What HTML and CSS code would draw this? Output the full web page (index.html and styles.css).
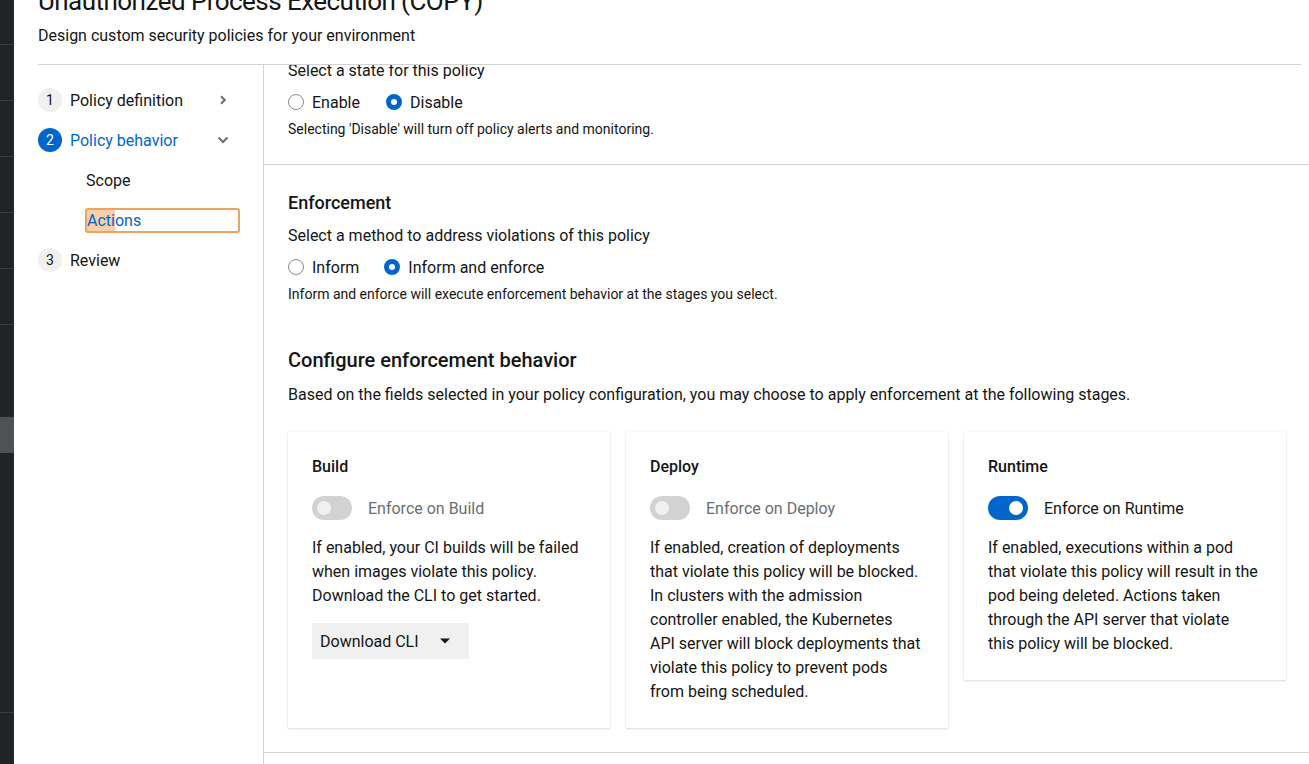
FILE: index.html
```html
<!DOCTYPE html>
<html lang="en">
<head>
<meta charset="utf-8">
<title>Unauthorized Process Execution (COPY)</title>
<link rel="stylesheet" href="styles.css">
</head>
<body>
<div class="app">
  <aside class="rail">
    <div class="rail-item first"></div>
    <div class="rail-item"></div>
    <div class="rail-item"></div>
    <div class="rail-item"></div>
    <div class="rail-item"></div>
    <div class="rail-item"></div>
    <div class="rail-active"></div>
    <div class="rail-rule"></div>
  </aside>
  <main class="page">
    <header class="page-head">
      <h1 class="title">Unauthorized Process Execution (COPY)</h1>
      <p class="subtitle">Design custom security policies for your environment</p>
    </header>
    <div class="wizard">
      <nav class="nav">
        <div class="nav-item">
          <span class="step-num">1</span>
          <span class="nav-label">Policy definition</span>
          <span class="chev"><svg width="10" height="10" viewBox="0 0 10 10"><polyline points="3,1.2 6.8,5 3,8.8" fill="none" stroke="#6a6e73" stroke-width="2"/></svg></span>
        </div>
        <div class="nav-item current">
          <span class="step-num">2</span>
          <span class="nav-label">Policy behavior</span>
          <span class="chev"><svg width="12" height="10" viewBox="0 0 12 10"><polyline points="1.5,2.5 6,7 10.5,2.5" fill="none" stroke="#6a6e73" stroke-width="2"/></svg></span>
        </div>
        <div class="sub-item"><span class="sub-link">Scope</span></div>
        <div class="sub-item"><span class="sub-link focused"><span class="find-hit">Acti</span>ons</span></div>
        <div class="nav-item">
          <span class="step-num">3</span>
          <span class="nav-label">Review</span>
        </div>
      </nav>
      <div class="wizard-body">
        <section class="section section-state">
          <p class="label">Select a state for this policy</p>
          <div class="radio-row">
            <span class="radio"><span class="radio-dot"></span>Enable</span>
            <span class="radio"><span class="radio-dot on"></span>Disable</span>
          </div>
          <p class="helper">Selecting 'Disable' will turn off policy alerts and monitoring.</p>
        </section>
        <section class="section section-enforce">
          <h2 class="h-md">Enforcement</h2>
          <p class="label spaced">Select a method to address violations of this policy</p>
          <div class="radio-row">
            <span class="radio"><span class="radio-dot"></span>Inform</span>
            <span class="radio"><span class="radio-dot on"></span>Inform and enforce</span>
          </div>
          <p class="helper">Inform and enforce will execute enforcement behavior at the stages you select.</p>

          <h2 class="h-lg">Configure enforcement behavior</h2>
          <p class="label intro">Based on the fields selected in your policy configuration, you may choose to apply enforcement at the following stages.</p>

          <div class="cards">
            <div class="card">
              <h3 class="card-title">Build</h3>
              <div class="toggle">
                <span class="switch"><span class="knob"></span></span>
                <span class="toggle-label muted">Enforce on Build</span>
              </div>
              <p class="card-text">If enabled, your CI builds will be failed<br>when images violate this policy.<br>Download the CLI to get started.</p>
              <div class="dropdown">
                <span>Download CLI</span>
                <svg width="10" height="6" viewBox="0 0 10 6"><path d="M0 0.5h10L5 5.5z" fill="#151515"/></svg>
              </div>
            </div>
            <div class="card">
              <h3 class="card-title">Deploy</h3>
              <div class="toggle">
                <span class="switch"><span class="knob"></span></span>
                <span class="toggle-label muted">Enforce on Deploy</span>
              </div>
              <p class="card-text">If enabled, creation of deployments<br>that violate this policy will be blocked.<br>In clusters with the admission<br>controller enabled, the Kubernetes<br>API server will block deployments that<br>violate this policy to prevent pods<br>from being scheduled.</p>
            </div>
            <div class="card card-short">
              <h3 class="card-title">Runtime</h3>
              <div class="toggle">
                <span class="switch on"><span class="knob"></span></span>
                <span class="toggle-label">Enforce on Runtime</span>
              </div>
              <p class="card-text">If enabled, executions within a pod<br>that violate this policy will result in the<br>pod being deleted. Actions taken<br>through the API server that violate<br>this policy will be blocked.</p>
            </div>
          </div>
        </section>
      </div>
    </div>
  </main>
</div>
</body>
</html>
```
FILE: styles.css
```css
* { box-sizing: border-box; }
html, body { margin: 0; height: 100%; }
body {
  font-family: Roboto, "Liberation Sans", sans-serif;
  font-size: 16px;
  color: #151515;
  background: #fff;
  overflow: hidden;
}
p, h1, h2, h3 { margin: 0; }

.app { display: flex; height: 764px; overflow: hidden; }

/* dark rail */
.rail { width: 14px; flex: none; background: #212427; display: flex; flex-direction: column; }
.rail-item { height: 56px; flex: none; border-bottom: 1px solid #3c3f42; }
.rail-item.first { height: 45px; }
.rail-active { height: 36px; flex: none; margin-top: 92px; background: #4f5255; }
.rail-rule { margin-top: 259px; border-top: 1px solid #3c3f42; }

/* page */
.page { flex: 1; min-width: 0; display: flex; flex-direction: column; }
.page-head { margin: 0 8px 0 24px; padding-bottom: 16px; border-bottom: 1px solid #d2d2d2; }
.title { margin-top: -17px; font-size: 26px; letter-spacing: -0.55px; line-height: 36px; font-weight: 400; white-space: nowrap; }
.subtitle { margin-top: 5px; font-size: 16px; line-height: 24px; }

.wizard { flex: 1; min-height: 0; display: flex; margin-left: 24px; }

/* nav */
.nav { width: 226px; flex: none; border-right: 1px solid #d2d2d2; padding: 15px 23px 0 0; }
.nav-item { display: flex; align-items: center; height: 40px; gap: 8px; }
.step-num {
  width: 24px; height: 24px; border-radius: 50%; background: #f0f0f0;
  display: flex; align-items: center; justify-content: center; font-size: 14px; flex: none;
}
.nav-item.current .step-num { background: #0066cc; color: #fff; }
.nav-item.current .nav-label { color: #0066cc; }
.chev { margin-left: auto; margin-right: 5px; width: 24px; display: flex; justify-content: center; align-items: center; }
.sub-item { height: 40px; display: flex; align-items: center; padding-left: 48px; }
.sub-link { line-height: 21px; }
.sub-link.focused {
  flex: 1; margin-left: -1px; color: #0066cc; border: 2px solid #eea35f; border-radius: 3px;
  height: 25px; display: flex; align-items: center; padding-left: 0;
}
.find-hit { background: #f7cfaa; line-height: 21px; }

/* body */
.wizard-body { flex: 1; min-width: 0; overflow: hidden; }
.section { padding: 0 23px 24px 24px; border-bottom: 1px solid #d2d2d2; }
.section-state { margin-top: -6px; padding-bottom: 24px; }
.section-enforce { padding-top: 24px; }

.label { line-height: 24px; }
.label.spaced { margin-top: 8px; }
.radio-row { display: flex; align-items: center; height: 24px; margin-top: 7px; }
.radio { display: inline-flex; align-items: center; gap: 8px; margin-right: 26px; }
.section-enforce .radio { margin-right: 25px; }
.radio-dot {
  width: 16px; height: 16px; border-radius: 50%; border: 1px solid #8a8d90; background: #fff; flex: none;
}
.radio-dot.on { border: 5px solid #0066cc; }
.helper { margin-top: 5px; font-size: 14px; line-height: 21px; }

.h-md { font-size: 18px; line-height: 27px; font-weight: 500; }
.h-lg { margin-top: 42px; font-size: 20px; line-height: 26px; font-weight: 500; }
.label.intro { margin-top: 10px; }

/* cards */
.cards { margin-top: 25px; display: grid; grid-template-columns: repeat(3, 1fr); gap: 16px; }
.card {
  padding: 24px; background: #fff;
  box-shadow: 0 1px 2px 0 rgba(3, 3, 3, 0.12), 0 0 2px 0 rgba(3, 3, 3, 0.06);
}
.card-short { align-self: start; }
.card-title { font-size: 16px; line-height: 21px; font-weight: 500; margin-bottom: 19px; }
.toggle { display: flex; align-items: center; gap: 16px; height: 24px; }
.switch {
  width: 40px; height: 24px; border-radius: 12px; background: #d2d2d2;
  display: flex; align-items: center; padding: 0 5px; flex: none;
}
.knob { width: 14px; height: 14px; border-radius: 50%; background: #f0f0f0; }
.switch.on { background: #0066cc; justify-content: flex-end; }
.switch.on .knob { background: #fff; }
.toggle-label.muted { color: #6a6e73; }
.card-text { margin-top: 16px; line-height: 24px; white-space: nowrap; }
.dropdown {
  margin-top: 15px; width: 157px; height: 36px; background: #f0f0f0;
  display: flex; align-items: center; justify-content: space-between; padding: 0 19px 0 8px;
}
```
